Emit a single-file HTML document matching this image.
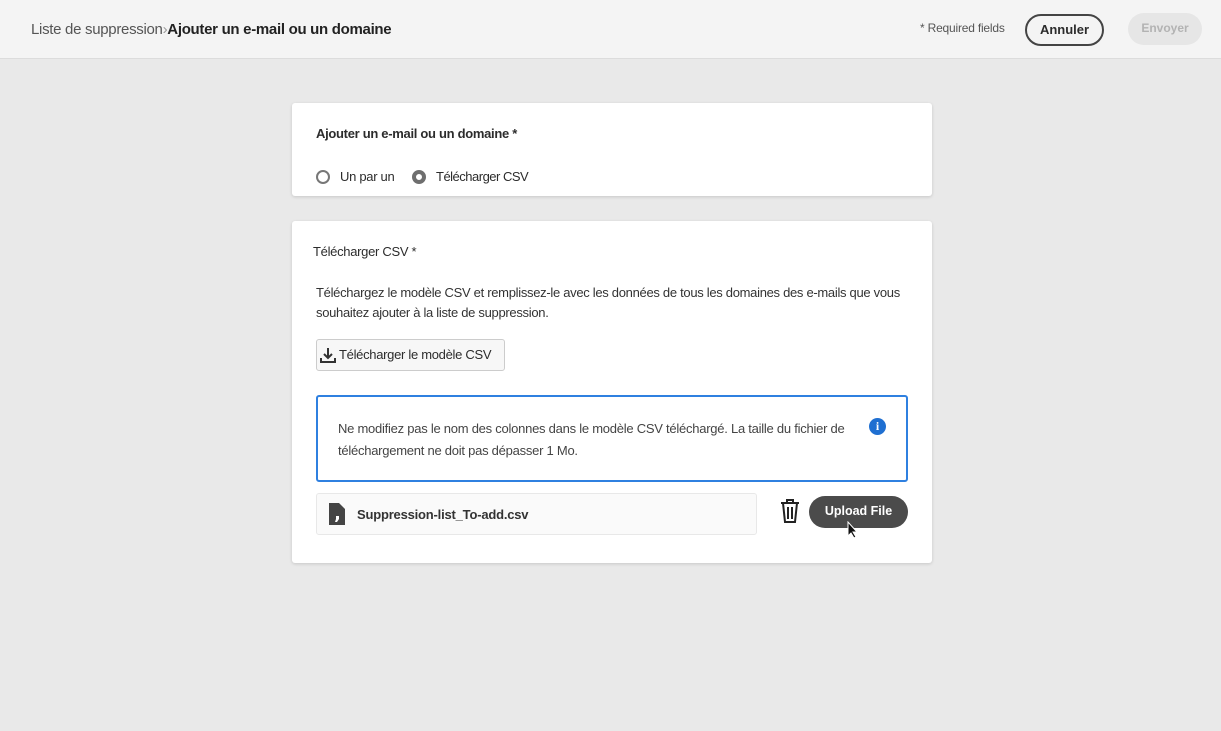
<!DOCTYPE html>
<html><head><meta charset="utf-8"><style>
*{box-sizing:border-box;margin:0;padding:0}
body{width:1221px;height:731px;background:#e9e9e9;font-family:"Liberation Sans",sans-serif;color:#2c2c2c;position:relative;overflow:hidden}
.top{position:absolute;left:0;top:0;width:1221px;height:59px;background:#f4f4f4;border-bottom:1px solid #dcdcdc}
.abs{position:absolute;white-space:nowrap}
.card{position:absolute;background:#fff;border-radius:3px;box-shadow:0 1px 3px rgba(0,0,0,.15)}
</style></head><body>
<div class="top">
 <div class="abs" style="left:31px;top:21px;font-size:15px;color:#555;letter-spacing:-0.3px">Liste de suppression<span style="color:#999">›</span><b style="color:#222">Ajouter un e-mail ou un domaine</b></div>
 <div class="abs" style="left:920px;top:21px;font-size:12px;color:#555;letter-spacing:-0.2px">* Required fields</div>
 <div class="abs" style="left:1025px;top:14px;width:79px;height:32px;border:2px solid #444;border-radius:16px;font-size:13px;font-weight:bold;text-align:center;line-height:28px">Annuler</div>
 <div class="abs" style="left:1128px;top:13px;width:74px;height:32px;background:#e6e6e6;border-radius:16px;font-size:12px;font-weight:bold;color:#b3b3b3;text-align:center;line-height:31px">Envoyer</div>
</div>
<div class="card" style="left:292px;top:103px;width:640px;height:93px">
 <div class="abs" style="left:24px;top:23px;font-size:13px;font-weight:bold;letter-spacing:-0.3px">Ajouter un e-mail ou un domaine *</div>
 <div class="abs" style="left:24px;top:67px;width:14px;height:14px;border:2px solid #777;border-radius:50%"></div>
 <div class="abs" style="left:48px;top:66px;font-size:13px;letter-spacing:-0.3px">Un par un</div>
 <div class="abs" style="left:120px;top:67px;width:14px;height:14px;border:4px solid #6e6e6e;border-radius:50%;background:#fff"></div>
 <div class="abs" style="left:144px;top:66px;font-size:13px;letter-spacing:-0.5px">Télécharger CSV</div>
</div>
<div class="card" style="left:292px;top:221px;width:640px;height:342px">
 <div class="abs" style="left:21px;top:23px;font-size:13px;letter-spacing:-0.3px">Télécharger CSV *</div>
 <div class="abs" style="left:24px;top:62px;font-size:13px;line-height:20px;letter-spacing:-0.3px;color:#333">Téléchargez le modèle CSV et remplissez-le avec les données de tous les domaines des e-mails que vous<br>souhaitez ajouter à la liste de suppression.</div>
 <div class="abs" style="left:24px;top:118px;width:189px;height:32px;border:1px solid #ccc;border-radius:3px;background:#f7f7f7">
  <svg class="abs" style="left:2px;top:6px" width="18" height="18" viewBox="0 0 18 18"><path d="M9 2v10M5 8l4 4 4-4M2 12v4h14v-4" stroke="#333" stroke-width="2" fill="none"/></svg>
  <div class="abs" style="left:22px;top:7px;font-size:13px;letter-spacing:-0.3px">Télécharger le modèle CSV</div>
 </div>
 <div class="abs" style="left:24px;top:174px;width:592px;height:87px;border:2px solid #2f80e0;border-radius:3px">
  <div class="abs" style="left:20px;top:21px;font-size:13px;line-height:22px;letter-spacing:-0.25px;color:#444">Ne modifiez pas le nom des colonnes dans le modèle CSV téléchargé. La taille du fichier de<br>téléchargement ne doit pas dépasser 1 Mo.</div>
  <div class="abs" style="left:551px;top:21px;width:17px;height:17px;border-radius:50%;background:#1f6fd1;color:#fff;font-size:12px;font-weight:bold;text-align:center;line-height:17px;font-family:'Liberation Serif',serif">i</div>
 </div>
 <div class="abs" style="left:24px;top:272px;width:441px;height:42px;border:1px solid #e8e8e8;border-radius:3px;background:#fafafa">
  <svg class="abs" style="left:12px;top:9px" width="16" height="22" viewBox="0 0 16 22"><path d="M0 0h10l6 6v16H0z" fill="#444"/><path d="M7 13h3v3l-2 3H6l1-3z" fill="#fff"/></svg>
  <div class="abs" style="left:40px;top:13px;font-size:13px;font-weight:bold;letter-spacing:-0.2px;color:#333">Suppression-list_To-add.csv</div>
 </div>
 <svg class="abs" style="left:488px;top:278px" width="20" height="24" viewBox="0 0 20 24"><path d="M1 4h18M7 4V1h6v3M3 4l2 19h10l2-19M8 8v12M12 8v12" stroke="#222" stroke-width="2" fill="none"/></svg>
 <div class="abs" style="left:517px;top:275px;width:99px;height:32px;border-radius:16px;background:#4b4b4b;color:#fff;font-size:12.5px;font-weight:bold;text-align:center;line-height:31px">Upload File</div>
 <svg class="abs" style="left:555px;top:300px" width="12" height="18" viewBox="0 0 12 18"><path d="M1 1v14l3-3 3 5 2-1-3-5h4z" fill="#111" stroke="#fff" stroke-width="1"/></svg>
</div>
</body></html>
